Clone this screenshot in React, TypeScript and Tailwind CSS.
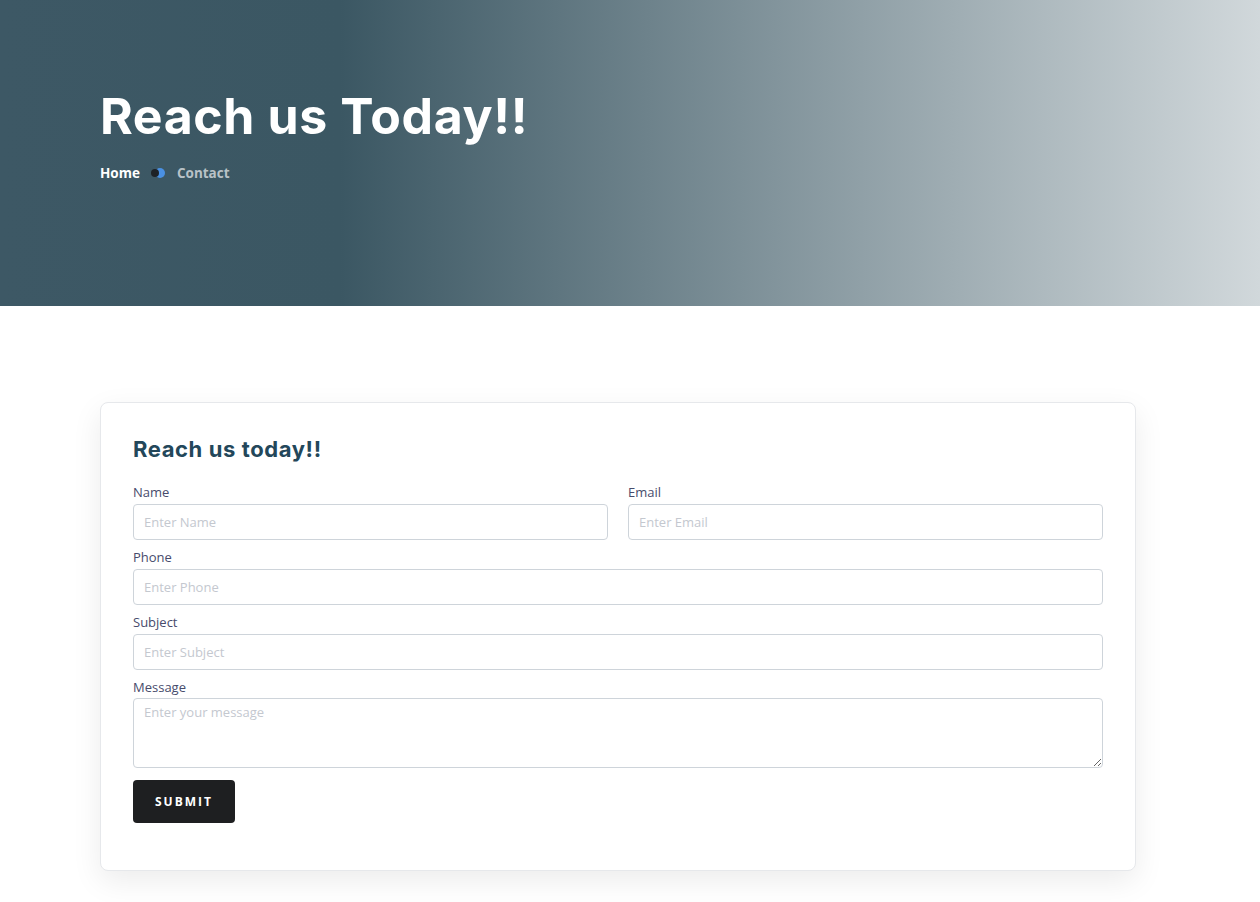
import React from "react";

function Field({ label, placeholder }: { label: string; placeholder: string }) {
  return (
    <div className="flex flex-col">
      <label className="text-[13px] leading-[18px] mb-[3px] text-[#474b6c]" style={{ fontFamily: '"Open Sans", sans-serif' }}>
        {label}
      </label>
      <input
        placeholder={placeholder}
        className="h-[36px] w-full rounded-[4px] border border-[#ced4da] bg-white px-[10px] text-[13px] text-[#495057] placeholder:text-[#c4c8cf] outline-none"
        style={{ fontFamily: '"Open Sans", sans-serif' }}
      />
    </div>
  );
}

export default function App() {
  return (
    <div className="min-h-[902px] bg-white" style={{ fontFamily: '"Open Sans", sans-serif' }}>
      <section className="h-[306px] bg-[linear-gradient(to_right,#3d5865_0%,#3b5763_27%,#d1d8db_100%)] pl-[100px] pt-[84px]">
        <h1 className="text-[50px] leading-[64px] font-bold text-white tracking-[0.6px]" style={{ fontFamily: 'Inter, sans-serif' }}>
          Reach us Today!!
        </h1>
        <div className="mt-[15px] flex items-center text-[13.5px] font-bold" style={{ fontFamily: '"Open Sans", sans-serif' }}>
          <span className="text-white">Home</span>
          <svg width="16" height="12" viewBox="0 0 16 12" className="ml-[10px] mr-[11px]">
            <circle cx="10" cy="6" r="5" fill="#4a90e2" />
            <circle cx="5" cy="6" r="4" fill="#1e2226" />
          </svg>
          <span className="text-[#b9c2c7]">Contact</span>
        </div>
      </section>

      <section className="px-[100px] pt-[96px] pb-[32px]">
        <div className="w-[1036px] rounded-[8px] border border-[#e6e8eb] bg-white px-[32px] pt-[31px] pb-[47px] shadow-[0_10px_30px_rgba(0,0,0,0.08)]">
          <h2 className="text-[22px] leading-[30px] font-bold text-[#23475a] mb-[19px] tracking-[0.6px]" style={{ fontFamily: 'Inter, sans-serif' }}>
            Reach us today!!
          </h2>
          <div className="flex flex-col gap-[8px]">
            <div className="grid grid-cols-2 gap-[20px]">
              <Field label="Name" placeholder="Enter Name" />
              <Field label="Email" placeholder="Enter Email" />
            </div>
            <Field label="Phone" placeholder="Enter Phone" />
            <Field label="Subject" placeholder="Enter Subject" />
            <div className="flex flex-col">
              <label className="text-[13px] leading-[18px] mb-[2px] text-[#474b6c]">Message</label>
              <textarea
                placeholder="Enter your message"
                className="block h-[70px] w-full rounded-[4px] border border-[#ced4da] bg-white px-[10px] py-[4px] text-[13px] text-[#495057] placeholder:text-[#c4c8cf] outline-none"
              />
            </div>
          </div>
          <button className="mt-[12px] h-[43px] w-[102px] rounded-[4px] bg-[#1e1f21] text-[12px] font-bold tracking-[2px] text-white">
            SUBMIT
          </button>
        </div>
      </section>
    </div>
  );
}
